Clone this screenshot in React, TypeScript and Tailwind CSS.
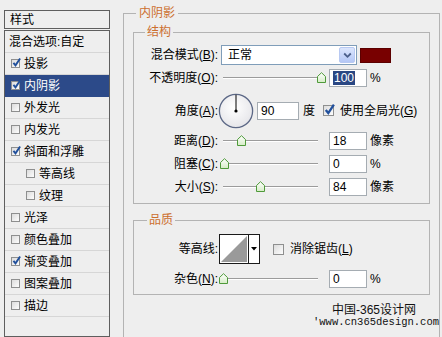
import React from "react";

type Item = { t: string; c?: boolean; sel?: boolean; indent?: boolean };

const items: Item[] = [
  { t: "投影", c: true },
  { t: "内阴影", c: true, sel: true },
  { t: "外发光" },
  { t: "内发光" },
  { t: "斜面和浮雕", c: true },
  { t: "等高线", indent: true },
  { t: "纹理", indent: true },
  { t: "光泽" },
  { t: "颜色叠加" },
  { t: "渐变叠加", c: true },
  { t: "图案叠加" },
  { t: "描边" },
];

function Box({ checked, big }: { checked?: boolean; big?: boolean }) {
  return (
    <span
      className={
        "relative inline-block shrink-0 border border-[#8e8f8f] bg-gradient-to-br from-[#dcdcdc] to-[#fdfdfd] " +
        (big ? "w-[11px] h-[11px]" : "w-[9px] h-[9px]")
      }
    >
      {checked && (
        <svg
          className="absolute left-[0px] top-[-2px] overflow-visible"
          width={big ? 11 : 9}
          height={big ? 11 : 9}
          viewBox="0 0 10 10"
        >
          <path d="M1.6 5.4 L3.9 8.2 L9 0.6" stroke="#21509c" strokeWidth="2.1" fill="none" />
        </svg>
      )}
    </span>
  );
}

function Thumb() {
  return (
    <svg width="9" height="11" viewBox="0 0 9 11">
      <defs>
        <linearGradient id="tg" x1="0" y1="0" x2="0" y2="1">
          <stop offset="0" stopColor="#ffffff" />
          <stop offset="1" stopColor="#d5ecc6" />
        </linearGradient>
      </defs>
      <path d="M0.5 4.5 L4.5 0.7 L8.5 4.5 L8.5 10.5 L0.5 10.5 Z" fill="url(#tg)" stroke="#4f9a3a" strokeWidth="1" />
    </svg>
  );
}

function Slider({ center }: { center: number }) {
  return (
    <div className="relative ml-[3px] w-[104px] h-[18px] shrink-0">
      <div className="absolute left-[2px] top-[8px] w-[95px] h-[2px] border-t border-[#9b9b9b] border-b border-b-[#ffffff]" />
      <div className="absolute top-[3px]" style={{ left: center - 221 - 4 }}>
        <Thumb />
      </div>
    </div>
  );
}

function Input({ v, w = "w-[38px]", hl, cls = "" }: { v: string; w?: string; hl?: boolean; cls?: string }) {
  return (
    <div className={`${w} ${cls} h-[18px] shrink-0 border border-[#a5acb2] bg-white flex items-center pl-[3px] text-[12px] leading-[14px]`}>
      {hl ? <span className="bg-[#2a4783] text-white px-[1px]">{v}</span> : <span>{v}</span>}
    </div>
  );
}

function Label({ children }: { children: React.ReactNode }) {
  return <div className="w-[84px] shrink-0 text-right whitespace-nowrap">{children}</div>;
}

function Dial() {
  return (
    <svg width="36" height="36" viewBox="0 0 36 36" className="shrink-0">
      <defs>
        <radialGradient id="dg" cx="0.45" cy="0.4" r="0.6">
          <stop offset="0" stopColor="#ffffff" />
          <stop offset="1" stopColor="#e6e6ea" />
        </radialGradient>
      </defs>
      <circle cx="18" cy="18" r="16.6" fill="url(#dg)" stroke="#5c6886" strokeWidth="1.3" />
      <line x1="18" y1="18" x2="18" y2="1.8" stroke="#000" strokeWidth="1" />
      <circle cx="18" cy="18" r="1.6" fill="#000" />
    </svg>
  );
}

export default function App() {
  return (
    <div className="w-[442px] h-[337px] overflow-hidden bg-[#eeeeee] flex text-[12px] leading-[16px] text-black font-['Liberation_Sans','Noto_Sans_CJK_SC',sans-serif]">
      {/* Left list */}
      <div className="w-[110px] shrink-0 pl-[4px] pt-[10px] flex flex-col">
        <div className="h-[20px] border border-[#5e5e5e] pl-[5px] flex items-center">样式</div>
        <div className="mt-[1px] h-[320px] border border-[#5e5e5e] flex flex-col">
          <div className="h-[22px] border-b border-[#d6d6d6] pl-[4px] flex items-center whitespace-nowrap">混合选项:自定</div>
          {items.map((it) => (
            <div
              key={it.t}
              className={
                "h-[22px] border-b flex items-center gap-[4px] whitespace-nowrap " +
                (it.indent ? "pl-[21px] " : "pl-[6px] ") +
                (it.sel ? "bg-[#2c4a89] text-white border-[#2c4a89]" : "border-[#d6d6d6]")
              }
            >
              <Box checked={it.c} />
              <span>{it.t}</span>
            </div>
          ))}
        </div>
      </div>

      {/* Right panel */}
      <fieldset className="ml-[13px] mt-[5px] w-[311px] h-[345px] shrink-0 border border-[#b3b3b3]">
        <legend className="ml-[12px] px-[3px] leading-[16px] text-[#cc6f2f]">内阴影</legend>

        <fieldset className="mx-[9px] mt-[3px] border border-[#b3b3b3] pb-[7px]">
          <legend className="ml-[11px] px-[2px] leading-[16px] text-[#cc6f2f]">结构</legend>

          <div className="mt-[5px] h-[20px] flex items-center">
            <Label>
              混合模式(<u>B</u>):
            </Label>
            <div className="ml-[3px] w-[136px] h-[20px] border border-[#7f9db9] bg-white flex items-center justify-between">
              <span className="pl-[6px]">正常</span>
              <div className="w-[16px] h-[16px] mr-[1px] rounded-[2px] border border-[#b8c9f2] bg-gradient-to-b from-[#dce6fd] to-[#b4c7f6] flex items-center justify-center">
                <svg width="9" height="7" viewBox="0 0 9 7">
                  <path d="M1.2 1.5 L4.5 4.8 L7.8 1.5" stroke="#4b5f8a" strokeWidth="1.8" fill="none" />
                </svg>
              </div>
            </div>
            <div className="ml-[3px] w-[31px] h-[15px] bg-[#780000] border border-[#5c0000]" />
          </div>

          <div className="mt-[4px] h-[18px] flex items-center">
            <Label>
              不透明度(<u>O</u>):
            </Label>
            <Slider center={321} />
            <Input v="100" hl cls="ml-[4px]" />
            <span className="ml-[3px]">%</span>
          </div>

          <div className="mt-[6px] h-[35px] flex items-center">
            <Label>
              角度(<u>A</u>):
            </Label>
            <Dial />
            <Input v="90" w="w-[42px]" cls="ml-[3px]" />
            <span className="ml-[4px]">度</span>
            <span className="ml-[8px] flex items-center">
              <Box checked big />
            </span>
            <span className="ml-[6px] whitespace-nowrap">
              使用全局光(<u>G</u>)
            </span>
          </div>

          <div className="mt-[4px] h-[18px] flex items-center">
            <Label>
              距离(<u>D</u>):
            </Label>
            <Slider center={241} />
            <Input v="18" cls="ml-[4px]" />
            <span className="ml-[3px]">像素</span>
          </div>

          <div className="mt-[5px] h-[18px] flex items-center">
            <Label>
              阻塞(<u>C</u>):
            </Label>
            <Slider center={224} />
            <Input v="0" cls="ml-[4px]" />
            <span className="ml-[3px]">%</span>
          </div>

          <div className="mt-[5px] h-[18px] flex items-center">
            <Label>
              大小(<u>S</u>):
            </Label>
            <Slider center={260} />
            <Input v="84" cls="ml-[4px]" />
            <span className="ml-[3px]">像素</span>
          </div>
        </fieldset>

        <fieldset className="mx-[9px] mt-[8px] border border-[#b3b3b3] pb-[6px]">
          <legend className="ml-[13px] px-[2px] leading-[16px] text-[#cc6f2f]">品质</legend>

          <div className="mt-[6px] h-[30px] flex items-center">
            <Label>等高线:</Label>
            <div className="ml-[1px] w-[41px] h-[30px] border border-[#1a1a1a] bg-white flex shrink-0">
              <svg width="28" height="28" viewBox="0 0 28 28" className="shrink-0">
                <polygon points="1,27 27,1 27,27" fill="#9a9a9a" />
              </svg>
              <div className="flex-1 border-l border-[#1a1a1a] flex items-center justify-center">
                <svg width="6" height="4" viewBox="0 0 6 4">
                  <polygon points="0,0 6,0 3,3.5" fill="#000" />
                </svg>
              </div>
            </div>
            <span className="ml-[13px] flex items-center">
              <Box big />
            </span>
            <span className="ml-[6px] whitespace-nowrap">
              消除锯齿(<u>L</u>)
            </span>
          </div>

          <div className="mt-[6px] h-[18px] flex items-center">
            <Label>
              杂色(<u>N</u>):
            </Label>
            <Slider center={223} />
            <Input v="0" cls="ml-[4px]" />
            <span className="ml-[3px]">%</span>
          </div>
        </fieldset>

        <div className="mt-[9px] ml-[208px] leading-[12px] whitespace-nowrap text-[#111]">中国-365设计网</div>
        <div className="ml-[189px] leading-[12px] whitespace-nowrap text-[10.5px] text-[#111] font-['Liberation_Mono',monospace]">
          'www.cn365design.com
        </div>
      </fieldset>
    </div>
  );
}
